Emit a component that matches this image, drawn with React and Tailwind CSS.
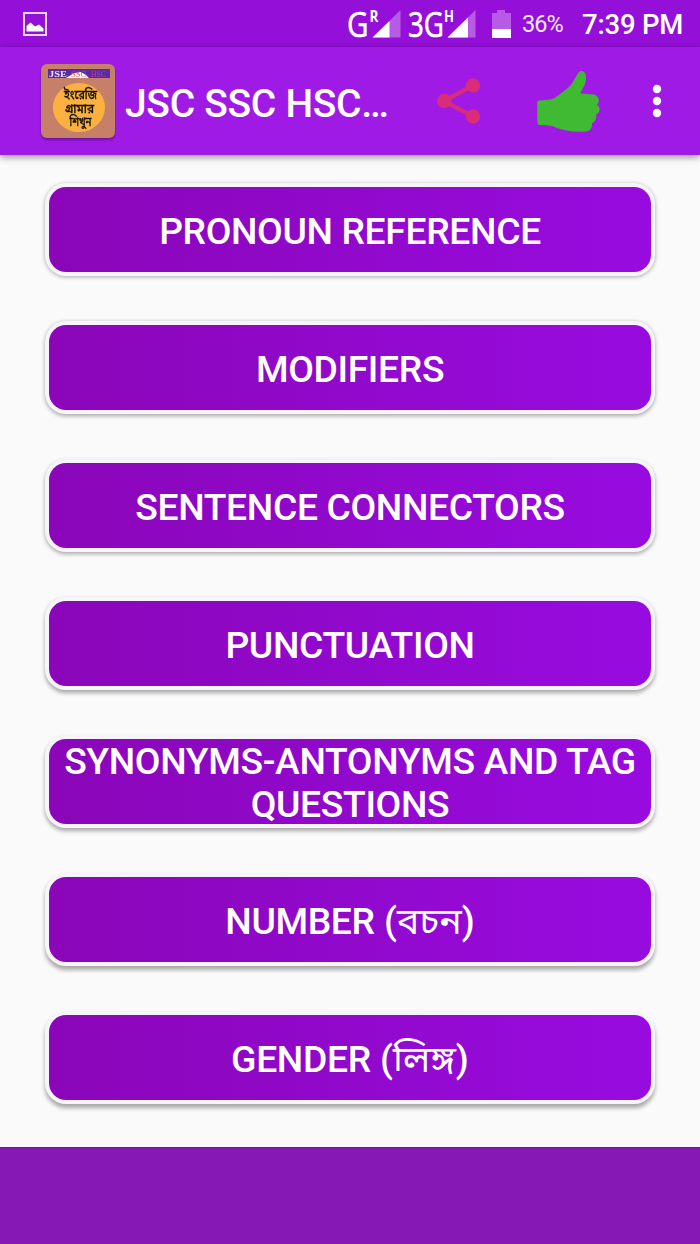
import React from 'react';

const topics = [
  { label: 'PRONOUN REFERENCE' },
  { label: 'MODIFIERS' },
  { label: 'SENTENCE CONNECTORS' },
  { label: 'PUNCTUATION' },
  { label: 'SYNONYMS-ANTONYMS AND TAG QUESTIONS' },
  { label: 'NUMBER', bangla: 'বচন' },
  { label: 'GENDER', bangla: 'লিঙ্গ' },
];

// --- STATUS BAR ---
const SignalIcons = () => (
  <svg className="ml-[300px] overflow-visible" width="129" height="30" viewBox="0 0 129 30" fill="#fff" fontFamily="Open Sans, Noto Sans, sans-serif">
    <text x="0" y="27.5" fontSize="34.5" textLength="21.5" lengthAdjust="spacingAndGlyphs" stroke="#fff" strokeWidth="0.6">G</text>
    <text x="22.500" y="12.5" fontSize="15.500" fontWeight="700" textLength="9" lengthAdjust="spacingAndGlyphs">R</text>
    <path d="M53.500 1V28.500H25.500Z" fill="#b75ae6" />
    <path d="M42.500 12V28.500H25.500Z" />

    <text x="61" y="27.5" fontSize="34.5" textLength="36" lengthAdjust="spacingAndGlyphs" stroke="#fff" strokeWidth="0.6">3G</text>
    <text x="97" y="12.5" fontSize="15.500" fontWeight="700" textLength="10" lengthAdjust="spacingAndGlyphs">H</text>
    <path d="M128.500 1V28.500H100.500Z" fill="#b75ae6" />
    <path d="M121 8.500V28.500H100.500Z" />
  </svg>
);

const StatusBar = () => (
  <div className="h-[47px] shrink-0 bg-[#9410d8] flex items-center text-white">
    <svg className="ml-[23px]" width="24" height="24" viewBox="0 0 24 24">
      <rect x="1" y="1" width="22" height="22" fill="none" stroke="#ecd5fa" strokeWidth="2" />
      <path d="M3.5 19.5V14L7.5 10.5L12 14.5L16 12.5L20.5 16.5V19.5Z" fill="#fff" />
    </svg>

    <SignalIcons />

    <svg className="ml-[16px]" width="19" height="28" viewBox="0 0 19 28">
      <path d="M0 3H5V0H13V3H19V28H0Z" fill="#b75ae6" />
      <path d="M0 19H19V28H0Z" fill="#fff" />
    </svg>
    <span className="ml-[11px] w-[60px] text-[23.5px] leading-none pt-0.5 tracking-[-0.9px] text-[#f5e8fd]">36%</span>
    <span className="text-[27.5px] leading-none font-medium whitespace-nowrap pt-[3px] tracking-[-0.2px]">7:39 PM</span>
  </div>
);

// --- APP LOGO ---
const AppLogo = () => (
  <svg className="drop-shadow-[0_2px_1px_rgba(0,0,0,0.3)]" width="74" height="74" viewBox="0 0 74 74">
    <rect width="74" height="74" rx="6" fill="#c67f69" />
    <rect x="7" y="5" width="62" height="9" fill="#5d2a9f" />
    <path d="M25 14C29 12 30 10 34 9L40 8L45 11L48 14Z" fill="#fff" />
    <g fontFamily="Liberation Serif, serif" fontSize="8">
      <text x="8" y="12.5" fill="#eee2f7" fontWeight="bold" textLength="18" lengthAdjust="spacingAndGlyphs">JSE</text>
      <text x="30" y="12.5" fill="#e4546a" textLength="15" lengthAdjust="spacingAndGlyphs">SSC</text>
      <text x="50" y="12.5" fill="#d03a80" textLength="15" lengthAdjust="spacingAndGlyphs">HSC</text>
    </g>
    <ellipse cx="38" cy="43.5" rx="26" ry="24.5" fill="#fcb040" />
    <g fill="#151208" stroke="#151208" strokeWidth="0.3" fontFamily="Noto Sans Bengali, Noto Sans, sans-serif" fontSize="12" fontWeight="500" textAnchor="middle">
      <text x="39.5" y="35" textLength="33" lengthAdjust="spacingAndGlyphs">ইংরেজি</text>
      <text x="38.5" y="48.500" textLength="29" lengthAdjust="spacingAndGlyphs">গ্রামার</text>
      <text x="39.5" y="61.500" textLength="22" lengthAdjust="spacingAndGlyphs">শিখুন</text>
    </g>
  </svg>
);

const ShareIcon = () => (
  <svg width="44" height="46" viewBox="0 0 44 46" fill="#d92d78">
    <path d="M36 7.5L7 23L36 38.5" fill="none" stroke="#d92d78" strokeWidth="4.2" />
    <circle cx="7.3" cy="23" r="7.2" />
    <circle cx="36" cy="7.5" r="7.2" />
    <circle cx="36" cy="38.5" r="7.2" />
  </svg>
);

const ThumbIcon = () => (
  <svg width="64" height="63" viewBox="0 0 64 63">
    <path
      d="M3 30.5C8 30 13 30 18 28.500C24 24 30 20 34.500 15.500C38 11 40 5.500 43 2C46-0.500 50 2 50 7C50.500 14 47 17 44.500 23.500L58 24.500C63 26 64 31 61 35C65 37.500 64 43 60 44.500C61 49 59 52 56 53C56.500 58 54 61 50 61.500C38 62.500 26 60.500 16 56C12 55 7 55.500 3 55C1 54 1.500 50 1.200 48V34C1.200 32 1.500 30.500 3 30.500Z"
      fill="#3fba32"
    />
  </svg>
);

// --- TOOLBAR ---
const Toolbar = () => (
  <header className="relative z-10 h-[108px] shrink-0 bg-[#9f1be5] flex items-center shadow-[0_2px_7px_rgba(0,0,0,0.45)]">
    <div className="ml-[41px]">
      <AppLogo />
    </div>
    <h1 className="ml-[10px] w-[312px] pt-1.5 text-[39px] leading-none font-medium text-white whitespace-nowrap tracking-[-0.3px]">
      JSC SSC HSC…
    </h1>
    <ShareIcon />
    <div className="ml-[55px]">
      <ThumbIcon />
    </div>
    <svg className="ml-[52px]" width="10" height="34" viewBox="0 0 10 34" fill="#fff">
      <circle cx="5" cy="5" r="4.2" />
      <circle cx="5" cy="17" r="4.2" />
      <circle cx="5" cy="29" r="4.2" />
    </svg>
  </header>
);

// the shadow drops further the lower the button sits on the screen
const TopicButton = ({ label, bangla, index }) => (
  <button
    className="w-full h-[93px] shrink-0 rounded-[21px] bg-[#f7f5f9] p-1"
    style={{ boxShadow: `0 ${1 + index * 0.5}px 4px rgba(0,0,0,0.33)` }}
  >
    <span className="flex h-full items-center justify-center rounded-[17px] bg-linear-to-r from-[#8a06b8] to-[#980be0] px-2 pt-[3px] text-center text-[37.3px] leading-[43px] font-medium tracking-[-0.36px] text-white">
      <span>
        {label}
        {bangla && (
          <span className="tracking-normal">
            {' '}(<span className="font-normal">{bangla}</span>)
          </span>
        )}
      </span>
    </span>
  </button>
);

export default function App() {
  return (
    <div className="w-[700px] h-[1244px] overflow-hidden flex flex-col bg-[#fafafa] font-['Roboto','Noto_Sans_Bengali','Noto_Sans',sans-serif]">
      <StatusBar />
      <Toolbar />
      <main className="flex-1 flex flex-col gap-[45px] px-[45px] pt-7">
        {topics.map((topic, index) => (
          <TopicButton key={topic.label} index={index} {...topic} />
        ))}
      </main>
      <footer className="h-[97px] shrink-0 bg-[#8619b5] border-t border-[#7210a2]" />
    </div>
  );
}
